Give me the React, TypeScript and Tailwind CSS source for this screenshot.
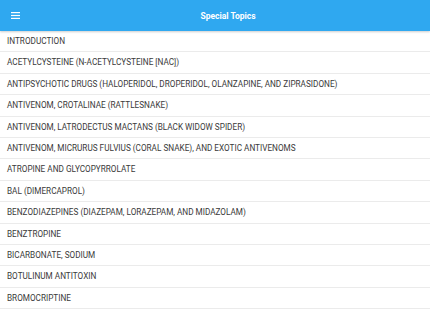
import React from "react";

const topics = [
  "INTRODUCTION",
  "ACETYLCYSTEINE (N-ACETYLCYSTEINE [NAC])",
  "ANTIPSYCHOTIC DRUGS (HALOPERIDOL, DROPERIDOL, OLANZAPINE, AND ZIPRASIDONE)",
  "ANTIVENOM, CROTALINAE (RATTLESNAKE)",
  "ANTIVENOM, LATRODECTUS MACTANS (BLACK WIDOW SPIDER)",
  "ANTIVENOM, MICRURUS FULVIUS (CORAL SNAKE), AND EXOTIC ANTIVENOMS",
  "ATROPINE AND GLYCOPYRROLATE",
  "BAL (DIMERCAPROL)",
  "BENZODIAZEPINES (DIAZEPAM, LORAZEPAM, AND MIDAZOLAM)",
  "BENZTROPINE",
  "BICARBONATE, SODIUM",
  "BOTULINUM ANTITOXIN",
  "BROMOCRIPTINE",
];

export default function App() {
  return (
    <div className="w-[430px] h-[310px] overflow-hidden bg-white" style={{ fontFamily: "Roboto, sans-serif" }}>
      <header className="relative z-10 h-[31px] bg-[#2fa8f0] flex items-center shadow-[0_1px_2px_rgba(0,0,0,0.2)]">
        <button className="w-[31px] h-[31px] flex items-center justify-center">
          <svg width="9" height="7" viewBox="0 0 9 7">
            <rect x="0" y="0" width="9" height="1.2" fill="white" />
            <rect x="0" y="2.9" width="9" height="1.2" fill="white" />
            <rect x="0" y="5.8" width="9" height="1.2" fill="white" />
          </svg>
        </button>
        <h1 className="flex-1 text-center pr-[5px] pt-[1px] text-white font-bold text-[8.5px]">Special Topics</h1>
      </header>
      <ul>
        {topics.map((t) => (
          <li
            key={t}
            className="h-[21.4px] flex items-center px-[7px] border-b border-[#ebebeb] text-[#3a3a3a] font-normal text-[8.2px] whitespace-nowrap"
          >
            {t}
          </li>
        ))}
      </ul>
    </div>
  );
}
